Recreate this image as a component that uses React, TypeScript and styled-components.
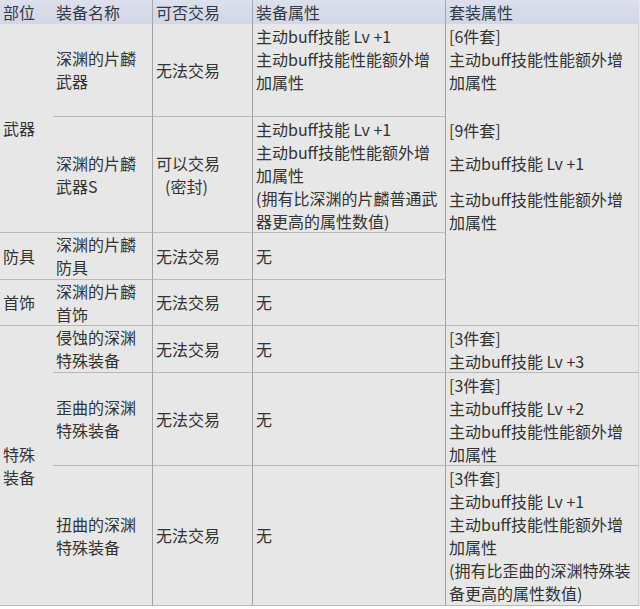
import React from "react";
import styled, { createGlobalStyle, css } from "styled-components";

const Global = createGlobalStyle`
  html, body { margin: 0; padding: 0; background: #ffffff; }
  body {
    font-family: "Noto Sans CJK SC", "Noto Sans", sans-serif;
    color: #333333;
  }
`;

const Table = styled.div`
  display: grid;
  grid-template-columns: 53px 100px 100px 193px 193px;
  grid-template-rows: 24px 93px 116px 47px 46px 47px 93px 140px;
  width: 640px;
  box-sizing: border-box;
  background: #e7e7e7;
  font-size: 16px;
  line-height: 23px;
`;

type Place = { $col: number; $row: number; $span?: number };

const place = css<Place>`
  grid-column: ${(p) => p.$col};
  grid-row: ${(p) => p.$row} / span ${(p) => p.$span ?? 1};
`;

const HeadCell = styled.div<Place & { $right?: boolean }>`
  ${place};
  box-sizing: border-box;
  display: flex;
  align-items: center;
  padding: 1px 3px 0;
  background: linear-gradient(#dcdfec, #d2d6e6);
  color: #333a45;
  white-space: nowrap;
  border-right: ${(p) => (p.$right ? "1px solid #a4a6ad" : "none")};
`;

const Cell = styled.div<
  Place & { $right?: boolean; $edge?: boolean; $top?: boolean }
>`
  ${place};
  box-sizing: border-box;
  display: flex;
  flex-direction: column;
  justify-content: ${(p) => (p.$top ? "flex-start" : "center")};
  padding: ${(p) => (p.$top ? "1px 3px 0" : "0 3px")};
  border-bottom: 1px solid #b9b9b9;
  border-right: ${(p) =>
    p.$right ? "1px solid #a2a2a2" : p.$edge ? "1px solid #cfcfcf" : "none"};
  overflow: hidden;
`;

const Line = styled.div<{ $gap?: number }>`
  margin-top: ${(p) => p.$gap ?? 0}px;
`;

const Indent = styled.span`
  display: inline-block;
  margin-left: 9px;
`;

export default function App() {
  return (
    <>
      <Global />
      <Table>
        <HeadCell $col={1} $row={1}>部位</HeadCell>
        <HeadCell $col={2} $row={1} $right>装备名称</HeadCell>
        <HeadCell $col={3} $row={1} $right>可否交易</HeadCell>
        <HeadCell $col={4} $row={1} $right>装备属性</HeadCell>
        <HeadCell $col={5} $row={1}>套装属性</HeadCell>

        {/* 武器 */}
        <Cell $col={1} $row={2} $span={2}>武器</Cell>
        <Cell $col={2} $row={2} $right>深渊的片麟武器</Cell>
        <Cell $col={3} $row={2} $right>无法交易</Cell>
        <Cell $col={4} $row={2} $right $top>
          主动buff技能 Lv +1
          <br />
          主动buff技能性能额外增加属性
        </Cell>
        <Cell $col={5} $row={2} $span={4} $edge $top>
          <Line>[6件套]</Line>
          <Line>主动buff技能性能额外增加属性</Line>
          <Line $gap={25}>[9件套]</Line>
          <Line $gap={10}>主动buff技能 Lv +1</Line>
          <Line $gap={13}>主动buff技能性能额外增加属性</Line>
        </Cell>

        <Cell $col={2} $row={3} $right>深渊的片麟武器S</Cell>
        <Cell $col={3} $row={3} $right>
          <Line>可以交易</Line>
          <Line>
            <Indent>(密封)</Indent>
          </Line>
        </Cell>
        <Cell $col={4} $row={3} $right $top>
          <Line>主动buff技能 Lv +1</Line>
          <Line>主动buff技能性能额外增加属性</Line>
          <Line>(拥有比深渊的片麟普通武器更高的属性数值)</Line>
        </Cell>

        {/* 防具 */}
        <Cell $col={1} $row={4}>防具</Cell>
        <Cell $col={2} $row={4} $right>深渊的片麟防具</Cell>
        <Cell $col={3} $row={4} $right>无法交易</Cell>
        <Cell $col={4} $row={4} $right>无</Cell>

        {/* 首饰 */}
        <Cell $col={1} $row={5}>首饰</Cell>
        <Cell $col={2} $row={5} $right>深渊的片麟首饰</Cell>
        <Cell $col={3} $row={5} $right>无法交易</Cell>
        <Cell $col={4} $row={5} $right>无</Cell>

        {/* 特殊装备 */}
        <Cell $col={1} $row={6} $span={3}>
          特殊
          <br />
          装备
        </Cell>
        <Cell $col={2} $row={6} $right>侵蚀的深渊特殊装备</Cell>
        <Cell $col={3} $row={6} $right>无法交易</Cell>
        <Cell $col={4} $row={6} $right>无</Cell>
        <Cell $col={5} $row={6} $edge $top>
          <Line>[3件套]</Line>
          <Line>主动buff技能 Lv +3</Line>
        </Cell>

        <Cell $col={2} $row={7} $right>歪曲的深渊特殊装备</Cell>
        <Cell $col={3} $row={7} $right>无法交易</Cell>
        <Cell $col={4} $row={7} $right>无</Cell>
        <Cell $col={5} $row={7} $edge $top>
          <Line>[3件套]</Line>
          <Line>主动buff技能 Lv +2</Line>
          <Line>主动buff技能性能额外增加属性</Line>
        </Cell>

        <Cell $col={2} $row={8} $right>扭曲的深渊特殊装备</Cell>
        <Cell $col={3} $row={8} $right>无法交易</Cell>
        <Cell $col={4} $row={8} $right>无</Cell>
        <Cell $col={5} $row={8} $edge $top>
          <Line>[3件套]</Line>
          <Line>主动buff技能 Lv +1</Line>
          <Line>主动buff技能性能额外增加属性</Line>
          <Line>(拥有比歪曲的深渊特殊装备更高的属性数值)</Line>
        </Cell>
      </Table>
    </>
  );
}
